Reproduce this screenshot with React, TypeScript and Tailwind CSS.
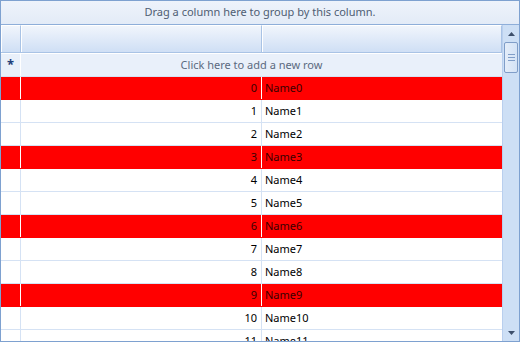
import React from 'react';

const rows = Array.from({ length: 12 }, (_, i) => ({ id: i, name: `Name${i}` }));

const Scrollbar: React.FC = () => (
  <div className="w-[17px] flex flex-col bg-[#cddff5] border-l border-[#b9cfee]">
    <div className="h-[17px] flex items-center justify-center">
      <svg width="7" height="4" viewBox="0 0 7 4">
        <path d="M0 4 L3.5 0 L7 4 Z" fill="#3d4f6b" />
      </svg>
    </div>
    <div className="mx-[1px] h-[31px] rounded-[2px] border border-[#7f9dc8] bg-gradient-to-r from-[#e4edf9] to-[#d4e3f6] flex flex-col items-center justify-center gap-[2px]">
      <div className="w-[7px] h-px bg-[#7f9dc8]" />
      <div className="w-[7px] h-px bg-[#7f9dc8]" />
      <div className="w-[7px] h-px bg-[#7f9dc8]" />
    </div>
    <div className="flex-1" />
    <div className="h-[17px] flex items-center justify-center">
      <svg width="7" height="4" viewBox="0 0 7 4">
        <path d="M0 0 L7 0 L3.5 4 Z" fill="#3d4f6b" />
      </svg>
    </div>
  </div>
);

const DataRow: React.FC<{ id: number; name: string }> = ({ id, name }) => {
  const hot = id % 3 === 0;
  return (
    <div className={`flex h-[23px] shrink-0 border-b ${hot ? 'bg-[#ff0000] border-[#ff0000]' : 'bg-white border-[#d5e2f4]'}`}>
      <div className={`w-[20px] border-r ${hot ? 'border-white' : 'border-[#d5e2f4]'}`} />
      <div className={`w-[241px] border-r flex items-center justify-end pr-[4px] ${hot ? 'border-white text-[#3a0000]' : 'border-[#d5e2f4] text-black'}`}>
        {id}
      </div>
      <div className={`flex-1 flex items-center pl-[3px] ${hot ? 'text-[#3a0000]' : 'text-black'}`}>{name}</div>
    </div>
  );
};

export default function App() {
  return (
    <div
      className="w-[520px] h-[342px] border border-[#7ea1d0] flex flex-col overflow-hidden bg-white text-[11px]"
      style={{ fontFamily: '"Noto Sans", "Open Sans", sans-serif' }}
    >
      <div className="h-[24px] shrink-0 border-b border-[#8eaed9] bg-gradient-to-b from-[#eef3fb] to-[#e3ebf7] flex items-center justify-center text-[#4f5d73]">
        Drag a column here to group by this column.
      </div>
      <div className="flex-1 flex min-h-0">
        <div className="flex-1 flex flex-col min-w-0">
          <div className="h-[28px] shrink-0 flex border-b border-[#a9c3e5] bg-gradient-to-b from-[#f2f6fc] to-[#cfdff5]">
            <div className="w-[20px] border-r border-[#a9c3e5] border-l border-l-white border-t border-t-white" />
            <div className="w-[241px] border-r border-[#a9c3e5] border-l border-l-white border-t border-t-white" />
            <div className="flex-1 border-r border-[#a9c3e5] border-l border-l-white border-t border-t-white" />
          </div>
          <div className="h-[24px] shrink-0 flex border-b border-[#d5e2f4] border-t border-t-white bg-[#e9f0fa]">
            <div className="w-[20px] border-r border-white flex items-center justify-center text-[#1f3e78] text-[13px] font-bold">*</div>
            <div className="flex-1 flex items-center justify-center pr-[20px] text-[#5b6a80]">Click here to add a new row</div>
          </div>
          {rows.map(r => (
            <DataRow key={r.id} id={r.id} name={r.name} />
          ))}
        </div>
        <Scrollbar />
      </div>
    </div>
  );
}
